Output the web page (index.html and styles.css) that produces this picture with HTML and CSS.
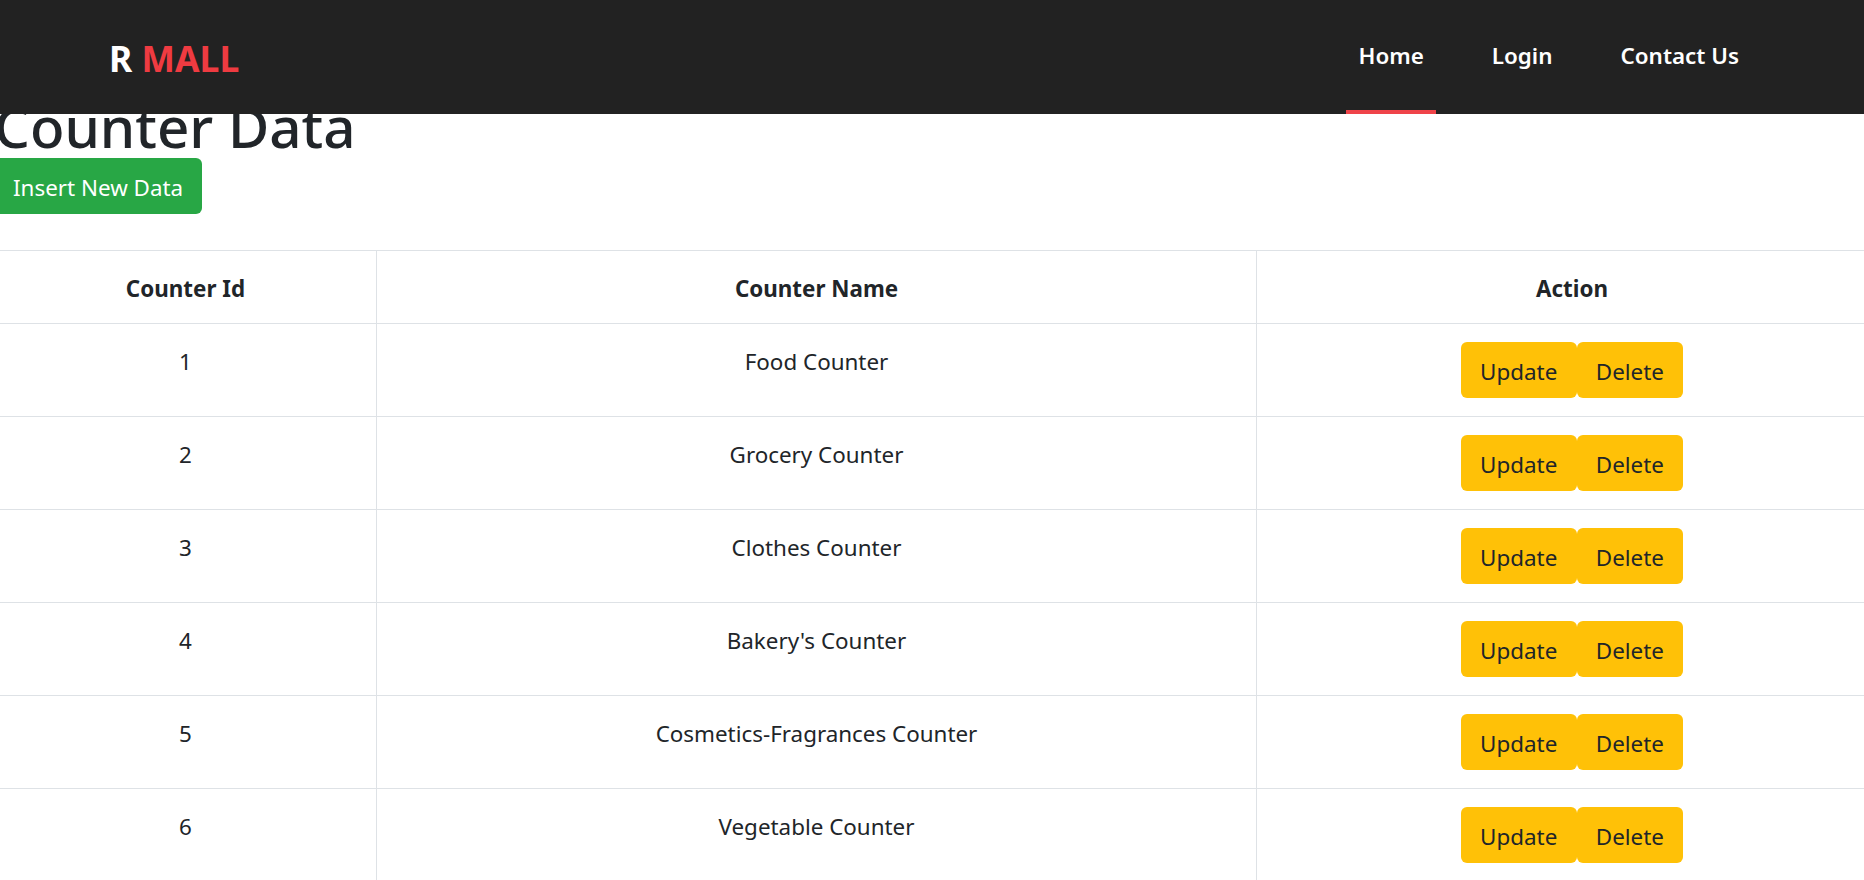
FILE: index.html
```html
<!doctype html>

<html>
    <head>
        <meta charset="utf-8">
        <title>R Mall - Counter Data</title>
        <link rel="stylesheet" href="styles.css">
    </head>
    <body>
        <nav class="navbar">
            <a class="brand" href="#">R <span class="brand-red">MALL</span></a>
            <ul class="nav-links">
                <li><a class="nav-link active" href="#">Home</a></li>
                <li><a class="nav-link" href="#">Login</a></li>
                <li><a class="nav-link" href="#">Contact Us</a></li>
            </ul>
        </nav>
        <main class="content">
            <h1 class="title">Counter Data</h1>
            <a class="btn btn-green" href="#">Insert New Data</a>
            <table class="data-table">
                <thead>
                    <tr><th class="col-id">Counter Id</th><th class="col-name">Counter Name</th><th>Action</th></tr>
                </thead>
                <tbody>
                    <tr><td>1</td><td>Food Counter</td><td class="actions"><a class="btn btn-yellow" href="#">Update</a><a class="btn btn-yellow" href="#">Delete</a></td></tr>
                    <tr><td>2</td><td>Grocery Counter</td><td class="actions"><a class="btn btn-yellow" href="#">Update</a><a class="btn btn-yellow" href="#">Delete</a></td></tr>
                    <tr><td>3</td><td>Clothes Counter</td><td class="actions"><a class="btn btn-yellow" href="#">Update</a><a class="btn btn-yellow" href="#">Delete</a></td></tr>
                    <tr><td>4</td><td>Bakery's Counter</td><td class="actions"><a class="btn btn-yellow" href="#">Update</a><a class="btn btn-yellow" href="#">Delete</a></td></tr>
                    <tr><td>5</td><td>Cosmetics-Fragrances Counter</td><td class="actions"><a class="btn btn-yellow" href="#">Update</a><a class="btn btn-yellow" href="#">Delete</a></td></tr>
                    <tr><td>6</td><td>Vegetable Counter</td><td class="actions"><a class="btn btn-yellow" href="#">Update</a><a class="btn btn-yellow" href="#">Delete</a></td></tr>
                </tbody>
            </table>
        </main>
    </body>
</html>
```

FILE: styles.css
```css
html, body {
    margin: 0;
    height: 100%;
    overflow: hidden;
}
body {
    font-family: "Noto Sans", "Open Sans", sans-serif;
    font-size: 22.4px;
    line-height: 30px;
    color: #212529;
    background: #fff;
}
a { text-decoration: none; }

.navbar {
    position: fixed;
    top: 0;
    left: 0;
    right: 0;
    z-index: 10;
    height: 114px;
    box-sizing: border-box;
    padding: 0 113px 0 109px;
    display: flex;
    align-items: stretch;
    justify-content: space-between;
    background: #222;
}
.brand {
    align-self: center;
    font-size: 35.5px;
    line-height: 54px;
    font-weight: 700;
    color: #fff;
    margin-top: 2px;
}
.brand-red { color: #ef3b41; }
.nav-links {
    display: flex;
    gap: 44px;
    list-style: none;
    margin: 0;
    padding: 0;
}
.nav-links li { display: flex; }
.nav-link {
    box-sizing: border-box;
    padding: 41px 12px 0;
    font-weight: 600;
    color: #fff;
}
.nav-link.active { border-bottom: 4px solid #ef4349; }

.content {
    width: 1894px;
    margin-left: -6px;
    padding-top: 95px;
}
.title {
    margin: 0;
    height: 63px;
    font-size: 56.5px;
    line-height: 63px;
    font-weight: 500;
}
.btn {
    display: inline-block;
    box-sizing: border-box;
    height: 56px;
    padding: 15px 19.25px 0;
    border-radius: 6px;
}
.btn-green {
    padding: 15px 19px 0;
    background: #28a745;
    color: #fff;
}
.btn-yellow {
    background: #ffc107;
    color: #212529;
}

.data-table {
    width: 100%;
    margin-top: 36px;
    border-collapse: collapse;
    table-layout: fixed;
    text-align: center;
}
.data-table th, .data-table td {
    border: 1px solid #dee2e6;
    vertical-align: top;
}
.data-table th {
    height: 73px;
    box-sizing: border-box;
    padding: 23px 16px 0;
    font-weight: 700;
}
.data-table td {
    height: 93px;
    box-sizing: border-box;
    padding: 23px 16px 0;
}
.data-table td.actions { padding-top: 18px; }
.col-id { width: 382px; }
.col-name { width: 880px; }
```
